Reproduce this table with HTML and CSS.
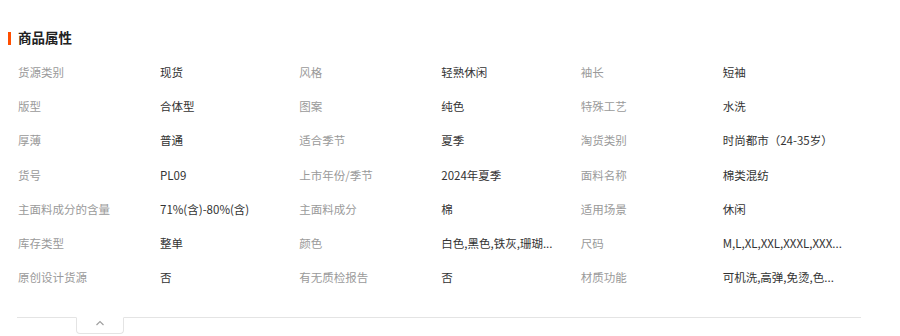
FILE: index.html
```html
<!DOCTYPE html>
<html lang="zh-CN">
<head>
<meta charset="utf-8">
<title>商品属性</title>
<link rel="stylesheet" href="styles.css">
</head>
<body>
<div class="panel">
  <div class="title"><span class="bar"></span><span class="title-text">商品属性</span></div>
  <div class="props">
    <div class="prop"><span class="label">货源类别</span><span class="value">现货</span></div>
    <div class="prop"><span class="label">风格</span><span class="value">轻熟休闲</span></div>
    <div class="prop"><span class="label">袖长</span><span class="value">短袖</span></div>
    <div class="prop"><span class="label">版型</span><span class="value">合体型</span></div>
    <div class="prop"><span class="label">图案</span><span class="value">纯色</span></div>
    <div class="prop"><span class="label">特殊工艺</span><span class="value">水洗</span></div>
    <div class="prop"><span class="label">厚薄</span><span class="value">普通</span></div>
    <div class="prop"><span class="label">适合季节</span><span class="value">夏季</span></div>
    <div class="prop"><span class="label">淘货类别</span><span class="value">时尚都市（24-35岁）</span></div>
    <div class="prop"><span class="label">货号</span><span class="value">PL09</span></div>
    <div class="prop"><span class="label">上市年份/季节</span><span class="value">2024年夏季</span></div>
    <div class="prop"><span class="label">面料名称</span><span class="value">棉类混纺</span></div>
    <div class="prop"><span class="label">主面料成分的含量</span><span class="value">71%(含)-80%(含)</span></div>
    <div class="prop"><span class="label">主面料成分</span><span class="value">棉</span></div>
    <div class="prop"><span class="label">适用场景</span><span class="value">休闲</span></div>
    <div class="prop"><span class="label">库存类型</span><span class="value">整单</span></div>
    <div class="prop"><span class="label">颜色</span><span class="value">白色,黑色,铁灰,珊瑚...</span></div>
    <div class="prop"><span class="label">尺码</span><span class="value">M,L,XL,XXL,XXXL,XXX...</span></div>
    <div class="prop"><span class="label">原创设计货源</span><span class="value">否</span></div>
    <div class="prop"><span class="label">有无质检报告</span><span class="value">否</span></div>
    <div class="prop"><span class="label">材质功能</span><span class="value">可机洗,高弹,免烫,色...</span></div>
  </div>
  <div class="footer">
    <div class="toggle">
      <svg width="10" height="6" viewBox="0 0 10 6"><path d="M1.5 5 L5 1.5 L8.5 5" fill="none" stroke="#a0a0a0" stroke-width="1.2"/></svg>
    </div>
  </div>
</div>
</body>
</html>
```
FILE: styles.css
```css
html, body {
  margin: 0;
  padding: 0;
  background: #fff;
}
body {
  font-family: "Noto Sans CJK SC", "Noto Sans", sans-serif;
  font-size: 11.5px;
  color: #333;
}
.panel {
  width: 900px;
  height: 336px;
  padding-top: 31px;
  box-sizing: border-box;
}
.title {
  display: flex;
  align-items: center;
  height: 14px;
  margin-left: 8px;
}
.bar {
  width: 3px;
  height: 13px;
  background: #ff4e00;
}
.title-text {
  margin-left: 7px;
  font-size: 13.5px;
  font-weight: bold;
  color: #222;
  line-height: 14px;
  position: relative;
  top: -1px;
}
.props {
  margin: 10px 0 0 17px;
  width: 844px;
  display: grid;
  grid-template-columns: repeat(3, 1fr);
}
.prop {
  display: flex;
  height: 34.2px;
  align-items: center;
  padding-left: 1px;
}
.label {
  width: 142px;
  color: #9a9a9a;
  flex: none;
}
.value {
  color: #333;
  white-space: nowrap;
}
.footer {
  margin: 23px 0 0 17px;
  width: 844px;
  border-top: 1px solid #e4e4e4;
}
.toggle {
  margin-left: 59px;
  margin-top: -1px;
  width: 46px;
  height: 13px;
  border: 1px solid #e4e4e4;
  border-top: 1px solid #fff;
  border-radius: 0 0 4px 4px;
  display: flex;
  justify-content: center;
  padding-top: 2px;
  box-sizing: content-box;
}
.toggle svg {
  display: block;
}
```
